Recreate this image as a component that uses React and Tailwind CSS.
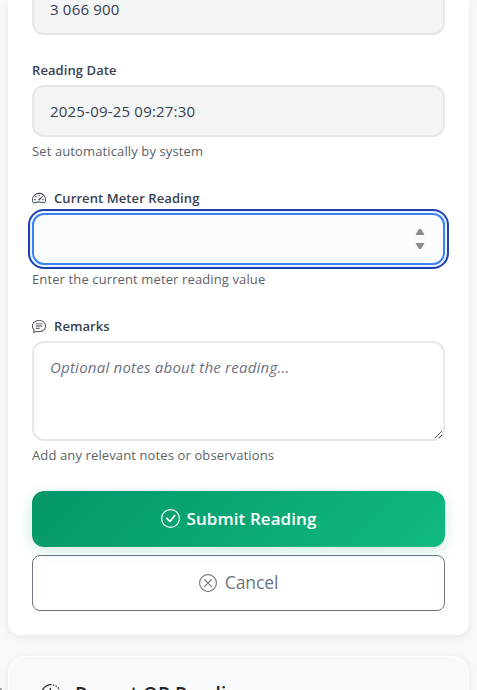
import {
  BsChatText,
  BsCheckCircle,
  BsClockHistory,
  BsSpeedometer2,
  BsXCircle,
} from "react-icons/bs";

function Label({ icon: Icon, children }) {
  return (
    <div className="flex h-[21px] items-center text-[13px] font-semibold tracking-[0.09px] text-[#374151]">
      {Icon && <Icon className="mr-2 mb-px size-[14px] shrink-0" />}
      <span className="whitespace-nowrap">{children}</span>
    </div>
  );
}

function Hint({ children }) {
  return (
    <div className="mt-1 h-[21px] whitespace-nowrap text-[13px] leading-[21px] tracking-[0.12px] text-[#5d6268]">
      {children}
    </div>
  );
}

function Spinner() {
  return (
    <svg width="10" height="22" viewBox="0 0 10 22" fill="#8b8b8b" aria-hidden="true">
      <path d="M4 1h2l3.2 5.2V7H.8v-.8z" />
      <path d="M4 21h2l3.2-5.2V15H.8v.8z" />
    </svg>
  );
}

function Grip() {
  return (
    <svg
      className="absolute right-0 bottom-0"
      width="9"
      height="9"
      viewBox="0 0 9 9"
      stroke="#444"
      strokeWidth="0.9"
      aria-hidden="true"
    >
      <path d="M1 8L8 1M5 8L8 5" />
    </svg>
  );
}

export default function App() {
  return (
    <div className="relative h-[690px] w-[477px] overflow-hidden bg-[#f8f9fb] px-2 font-['Open_Sans','Noto_Sans',sans-serif]">
      <section className="flex h-[635px] flex-col rounded-b-xl bg-white px-6 shadow-[0_2px_8px_rgba(0,0,0,0.08)]">
        <div className="h-[35px] rounded-b-xl border-2 border-t-0 border-[#e5e7eb] bg-[#f3f4f6] px-4 text-[15px] leading-[19px] tracking-[0.2px] text-[#374151]">
          3 066 900
        </div>

        <div className="mt-[25px]">
          <Label>Reading Date</Label>
          <div className="mt-1 flex h-[52px] items-center rounded-xl border-2 border-[#e5e7eb] bg-[#f3f4f6] px-4 text-[15px] tracking-[0.2px] text-[#374151]">
            2025-09-25 09:27:30
          </div>
          <Hint>Set automatically by system</Hint>
        </div>

        <div className="mt-[26px]">
          <Label icon={BsSpeedometer2}>Current Meter Reading</Label>
          <div className="mt-1 flex h-[52px] items-center justify-end rounded-xl border-2 border-[#3b82f6] bg-[#fafbfd] pr-[18px] shadow-[0_0_0_3px_#ebf3fe] outline-2 outline-offset-2 outline-[#1e40af]">
            <Spinner />
          </div>
          <Hint>Enter the current meter reading value</Hint>
        </div>

        <div className="mt-[26px]">
          <Label icon={BsChatText}>Remarks</Label>
          <div className="relative mt-1 h-[100px] rounded-xl border-2 border-[#e5e7eb] bg-white px-4 pt-3 text-[15px] leading-6 tracking-[0.23px] text-[#6b7280] italic">
            Optional notes about the reading...
            <Grip />
          </div>
          <Hint>Add any relevant notes or observations</Hint>
        </div>

        <div className="mt-[25px] flex flex-col gap-2">
          <button className="flex h-14 items-center justify-center gap-[7px] rounded-xl bg-linear-135 from-[#059669] to-[#10b981] pb-px text-[17px] font-semibold tracking-[0.07px] text-white shadow-[0_4px_15px_rgba(5,150,105,0.2)]">
            <BsCheckCircle className="size-[19px]" />
            <span>Submit Reading</span>
          </button>
          <button className="flex h-14 items-center justify-center gap-2 rounded-lg border border-[#6c757d] pb-px text-[17.5px] tracking-[-0.1px] text-[#6c757d]">
            <BsXCircle className="size-[18px]" />
            <span>Cancel</span>
          </button>
        </div>
      </section>

      <section className="mt-[21px] h-[80px] rounded-t-2xl border border-white bg-[#f8f9fb] px-8 pt-[22px] shadow-[0_2px_8px_rgba(0,0,0,0.08)]">
        <h2 className="flex items-center text-[19px] leading-[30px] font-semibold text-[#212529]">
          <BsClockHistory className="mr-[14px] size-5" />
          <span>Recent QR Readings</span>
        </h2>
      </section>

      <div className="absolute bottom-0 left-0 h-[2px] w-[2px] rounded-tr-sm bg-[#8d9094]" />
    </div>
  );
}
